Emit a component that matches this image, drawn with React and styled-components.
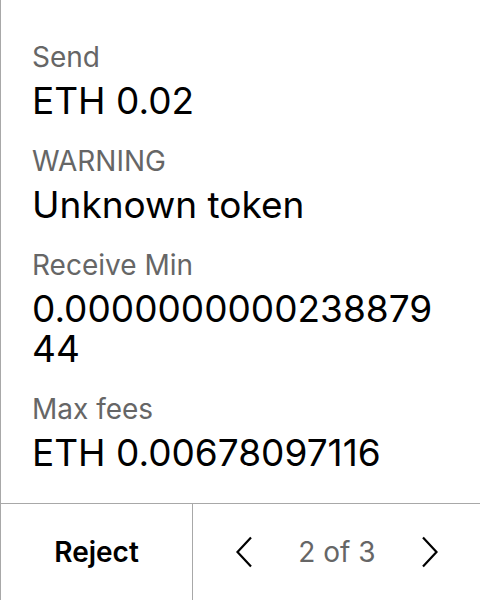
import React from "react";
import styled, { createGlobalStyle } from "styled-components";

const GlobalStyle = createGlobalStyle`
  html, body {
    margin: 0;
    padding: 0;
    background: #fff;
  }
  body {
    font-family: Inter, "Noto Sans", sans-serif;
    -webkit-font-smoothing: antialiased;
  }
`;

const fields = [
  { label: "Send", value: "ETH 0.02" },
  { label: "WARNING", value: "Unknown token" },
  { label: "Receive Min", value: "0.000000000023887944" },
  { label: "Max fees", value: "ETH 0.00678097116" },
];

const App = () => {
  return (
    <>
      <GlobalStyle />
      <StyledScreen>
        <StyledFields>
          {fields.map((f) => (
            <div className="field" key={f.label}>
              <p className="label">{f.label}</p>
              <p className="value">{f.value}</p>
            </div>
          ))}
        </StyledFields>
        <StyledFooter>
          <button className="reject">Reject</button>
          <div className="pager">
            <button className="arrow" aria-label="previous">
              <svg width="18" height="32" viewBox="0 0 18 32">
                <path d="M16 1.5 L2.5 16 L16 30.5" fill="none" stroke="#000" strokeWidth="2.2" />
              </svg>
            </button>
            <span className="count">2 of 3</span>
            <button className="arrow" aria-label="next">
              <svg width="18" height="32" viewBox="0 0 18 32">
                <path d="M2 1.5 L15.5 16 L2 30.5" fill="none" stroke="#000" strokeWidth="2.2" />
              </svg>
            </button>
          </div>
        </StyledFooter>
      </StyledScreen>
    </>
  );
};

export default App;

const StyledScreen = styled.div`
  width: 480px;
  height: 600px;
  box-sizing: border-box;
  border-left: 1px solid #a8a8a8;
  display: flex;
  flex-direction: column;
`;

const StyledFields = styled.div`
  flex: 1;
  padding: 40px 30px 0 31px;
  display: flex;
  flex-direction: column;
  gap: 23px;
  p {
    margin: 0;
  }
  .field {
    display: flex;
    flex-direction: column;
    gap: 7px;
  }
  .label {
    font-size: 28px;
    line-height: 34px;
    color: #666;
  }
  .value {
    font-size: 37px;
    line-height: 40px;
    color: #000;
    word-break: break-all;
  }
`;

const StyledFooter = styled.div`
  height: 96px;
  flex-shrink: 0;
  border-top: 1px solid #a8a8a8;
  display: grid;
  grid-template-columns: 192px 1fr;
  button {
    background: transparent;
    border: none;
    padding: 0;
    font-family: inherit;
    cursor: pointer;
  }
  .reject {
    border-right: 1px solid #a8a8a8;
    font-size: 28px;
    font-weight: 600;
    color: #000;
  }
  .pager {
    display: flex;
    align-items: center;
    justify-content: space-between;
    padding: 0 41px 0 42px;
  }
  .arrow {
    display: flex;
  }
  .count {
    font-size: 28px;
    color: #666;
  }
`;
